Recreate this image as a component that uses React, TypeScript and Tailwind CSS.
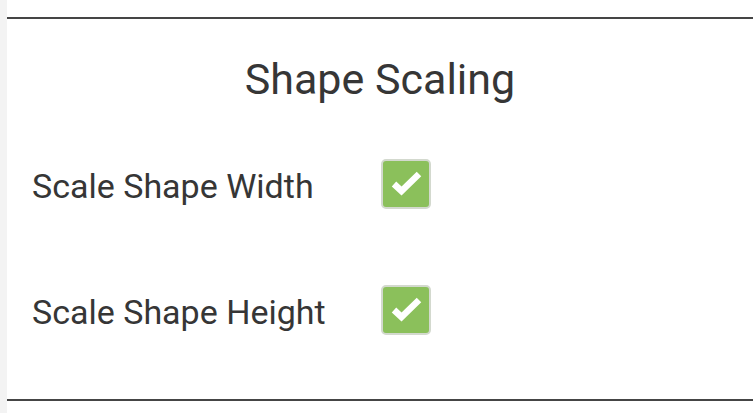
import React from "react";

function Check() {
  return (
    <div className="w-[50px] h-[50px] rounded-[5px] border-2 border-[#d3d9ce] bg-[#8bc05b] flex items-center justify-center">
      <svg width="33" height="28" viewBox="0 0 33 28">
        <polyline
          points="4,14 11.5,21 29,4"
          fill="none"
          stroke="#ffffff"
          strokeWidth="6.5"
          strokeLinecap="butt"
          strokeLinejoin="miter"
        />
      </svg>
    </div>
  );
}

function Row({ label, className }: { label: string; className: string }) {
  return (
    <div className={"flex items-center pl-[25px] " + className}>
      <div className="w-[349px] text-[34px] leading-[34px] text-[#363636] mt-[3px]">{label}</div>
      <Check />
    </div>
  );
}

export default function App() {
  return (
    <div
      className="flex w-[753px] h-[413px] bg-white overflow-hidden"
      style={{ fontFamily: "Roboto, 'Liberation Sans', sans-serif" }}
    >
      <div className="w-[7px] h-full bg-[#f3f3f3]" />
      <div className="flex-1 flex flex-col">
        <div className="mt-[17px] h-[384px] border-t-2 border-b-2 border-[#454545] flex flex-col">
          <div className="mt-[39px] h-[42px] text-center text-[43px] leading-[42px] text-[#363636]">
            Shape Scaling
          </div>
          <Row label="Scale Shape Width" className="mt-[59px]" />
          <Row label="Scale Shape Height" className="mt-[76px]" />
        </div>
      </div>
    </div>
  );
}
